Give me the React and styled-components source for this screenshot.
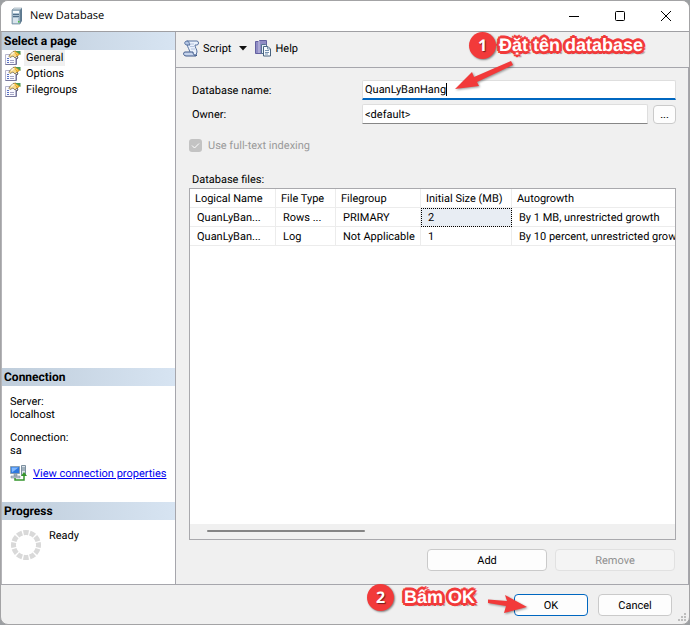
import React, { useState } from "react";
import styled, { createGlobalStyle } from "styled-components";

const GlobalStyle = createGlobalStyle`
  *, *::before, *::after { box-sizing: border-box; }
  body {
    margin: 0;
    background: #9c9fa2;
    color: #000;
    font: 11px/13px Roboto, "Liberation Sans", sans-serif;
    text-rendering: geometricPrecision;
  }
  button, input { font: inherit; color: inherit; text-rendering: inherit; }
`;

const Dialog = styled.main`
  display: flex;
  flex-direction: column;
  min-height: 100vh;
  border: 1px solid #a3a3a5;
  border-radius: 8px;
  background: #f0f0f0;
  overflow: hidden;
`;

const TitleBar = styled.header`
  display: flex;
  align-items: center;
  height: 31px;
  padding-left: 7px;
  background: #fff;
  border-bottom: 1px solid #9f9fa3;
`;

const Title = styled.h1`
  flex: 1;
  margin: 0 0 0 6px;
  font: 400 11px/16px "Open Sans", "Noto Sans", sans-serif;
`;

const WindowButton = styled.button`
  display: grid;
  place-items: center;
  width: 46px;
  height: 30px;
  padding: 0;
  border: 0;
  background: none;
`;

const Body = styled.div`
  flex: 1;
  display: grid;
  grid-template-columns: 175px minmax(0, 1fr);
  border-bottom: 1px solid #a6a6ac;
`;

const Sidebar = styled.aside`
  display: flex;
  flex-direction: column;
  background: #fff;
  border-left: 1px solid #b4b4b8;
  border-right: 1px solid #a6a6ac;
`;

const PageSection = styled.nav`
  flex: 1;
`;

const SideSection = styled.section`
  min-height: ${(p) => p.$height};
`;

const SideHeading = styled.h2`
  margin: 0;
  padding-left: 2px;
  font-size: 12px;
  line-height: 18px;
  background: linear-gradient(90deg, #bfcddb, #d7e4f2);
`;

const PageList = styled.ul`
  margin: 0;
  padding: 0;
  list-style: none;
`;

const PageItem = styled.li`
  display: flex;
  align-items: center;
  gap: 3px;
  height: 16px;
  padding-left: 3px;
`;

const PageButton = styled.button`
  padding: 0 2px;
  border: 0;
  line-height: 16px;
  background: ${(p) => (p.$active ? "#f0f0f0" : "transparent")};
`;

const ConnectionList = styled.dl`
  margin: 0;
  padding: 9px 8px 0;
  dd { margin: 0 0 10px; }
  dd:last-child { margin-bottom: 8px; }
`;

const ConnectionLink = styled.div`
  display: flex;
  align-items: center;
  gap: 6px;
  padding-left: 8px;
  a { color: #0000f0; }
`;

const Progress = styled.div`
  display: flex;
  gap: 7px;
  padding: 9px 8px;
`;

const Main = styled.div`
  display: flex;
  flex-direction: column;
  min-width: 0;
`;

const Toolbar = styled.div`
  display: flex;
  align-items: center;
  height: 36px;
  padding: 0 7px 3px;
  border-bottom: 1px solid #a6a6ac;
`;

const ToolButton = styled.button`
  display: flex;
  align-items: center;
  gap: 3px;
  padding: 0;
  border: 0;
  background: none;
`;

const MenuArrow = styled.button`
  display: grid;
  place-items: center;
  width: 24px;
  height: 20px;
  padding: 0;
  border: 0;
  background: none;
`;

const Content = styled.form`
  flex: 1;
  display: flex;
  flex-direction: column;
  padding: 12px 12px 13px 13px;
  border-right: 1px solid #a6a6ac;
`;

const Fields = styled.div`
  display: grid;
  grid-template-columns: 173px minmax(0, 1fr);
  row-gap: 4px;
  align-items: center;
`;

const FieldLabel = styled.label`
  padding-left: 3px;
`;

const FieldControl = styled.div`
  position: relative;
  display: flex;
  align-items: center;
  gap: 5px;
`;

const TextBox = styled.input`
  flex: 1;
  min-width: 0;
  height: 20px;
  padding: 0 2px;
  border: 1px solid #dedede;
  border-bottom: ${(p) => (p.$focused ? "2px solid #0067c0" : "1px solid #868686")};
  border-radius: 2px 2px 0 0;
  background: #fff;
  outline: none;
`;

const Caret = styled.span`
  position: absolute;
  left: 84px;
  top: 3px;
  width: 1px;
  height: 13px;
  background: #000;
`;

const Button = styled.button`
  width: ${(p) => p.$width};
  height: ${(p) => p.$height || "22px"};
  padding: 0;
  border: 1px solid ${(p) => (p.$primary ? "#0067c0" : "#cacaca")};
  border-radius: 4px;
  background: #fdfdfd;
  &:disabled {
    color: #8f8f8f;
    border-color: #e1e1e1;
    background: #f4f4f4;
  }
`;

const CheckLabel = styled.label`
  display: flex;
  align-items: center;
  gap: 6px;
  margin-top: 15px;
  color: #9a9a9a;
`;

const CheckBox = styled.input`
  appearance: none;
  width: 13px;
  height: 13px;
  margin: 0;
  border-radius: 3px;
  background: #c3c3c3;
`;

const CheckMark = styled.svg`
  position: absolute;
  inset: 0;
  pointer-events: none;
`;

const CheckWrap = styled.span`
  position: relative;
  display: flex;
`;

const FilesLabel = styled.h2`
  margin: 21px 0 2px 3px;
  font-size: 11px;
  font-weight: 400;
  line-height: 13px;
`;

const Grid = styled.div`
  flex: 1;
  display: flex;
  flex-direction: column;
  border: 1px solid #a9a9ad;
  background: #fff;
`;

const TableView = styled.div`
  flex: 1;
  overflow: hidden;
`;

const Table = styled.table`
  width: 100%;
  table-layout: fixed;
  border-collapse: separate;
  border-spacing: 0;
  th, td {
    height: 19px;
    padding: 0 0 0 7px;
    border-right: 1px solid #ececec;
    border-bottom: 1px solid #ececec;
    text-align: left;
    font-weight: 400;
    white-space: nowrap;
    overflow: hidden;
  }
  th { padding-left: 5px; }
  th:last-child, td:last-child { border-right: 0; }
`;

const Col = styled.col`
  width: ${(p) => p.$width};
`;

const Cell = styled.td`
  ${(p) => p.$selected && "background: #e8edf3; outline: 1px dotted #000; outline-offset: -1px;"}
`;

const ScrollTrack = styled.div`
  height: 15px;
  padding: 6px 17px;
  background: #f0f0f0;
`;

const ScrollThumb = styled.div`
  width: 35%;
  height: 2px;
  border-radius: 1px;
  background: #858585;
`;

const RowActions = styled.div`
  display: flex;
  justify-content: flex-end;
  gap: 8px;
  margin: 9px 1px 0 0;
`;

const Footer = styled.footer`
  position: relative;
  display: flex;
  justify-content: flex-end;
  gap: 10px;
  padding: 9px 17px 8px 0;
`;

const Grip = styled.svg`
  position: absolute;
  right: 2px;
  bottom: 2px;
`;

const Callout = styled.div`
  position: absolute;
  right: ${(p) => p.$right};
  top: ${(p) => p.$top};
  display: flex;
  align-items: center;
  gap: ${(p) => p.$gap};
  pointer-events: none;
`;

const CalloutNumber = styled.span`
  display: grid;
  place-items: center;
  width: 27px;
  height: 27px;
  border-radius: 50%;
  background: #f23a3a;
  color: #fff;
  font: 700 16px/27px "Open Sans", "Noto Sans", sans-serif;
  box-shadow: 1px 1px 2px #0007;
  text-shadow: 1px 1px 1px #0008;
`;

const CalloutText = styled.span`
  color: #fff;
  font: 700 18px/27px "Liberation Sans", Arial, sans-serif;
  white-space: nowrap;
  text-shadow:
    2px 0 #f23a3a, -2px 0 #f23a3a, 0 2px #f23a3a, 0 -2px #f23a3a,
    2px 2px #f23a3a, 2px -2px #f23a3a, -2px 2px #f23a3a, -2px -2px #f23a3a,
    3px 0 #f23a3a, -3px 0 #f23a3a, 0 3px #f23a3a, 0 -3px #f23a3a,
    3px 3px 1px #0005;
`;

const Arrow = styled.svg`
  position: absolute;
  right: ${(p) => p.$right};
  top: ${(p) => p.$top};
  overflow: visible;
  pointer-events: none;
  filter: drop-shadow(1px 1px 1px #0006);
`;

const ServerIcon = () => (
  <svg width="16" height="18" viewBox="0 0 16 18" aria-hidden="true">
    <path d="M4 3 6 1h8l-2 2z" fill="#dbe6ec" stroke="#8fa0ac" strokeWidth=".6" />
    <path d="M12 3l2-2v13l-2 3z" fill="#5d7990" />
    <path d="M4 3h8v14H4z" fill="#aac0d0" stroke="#6f8798" strokeWidth=".7" />
    <path d="M5 4h6v2H5z" fill="#f5fafc" />
    <path d="M5 7.5h6M5 9.5h6" stroke="#506e88" />
    <path d="M5 11h5v5H5z" fill="#d7e3eb" />
    <path d="M10 14h1.5v1.5H10z" fill="#48c63c" />
  </svg>
);

const PageIcon = () => (
  <svg width="16" height="16" viewBox="0 0 16 16" aria-hidden="true">
    <path d="M.5 4.500h10v10H.5z" fill="#fafaff" stroke="#b5b5cd" />
    <path d="M.5 14.500h11V8" fill="none" stroke="#77779c" />
    <path d="M2 8.500h2M2 10.500h2M2 12.500h2" stroke="#5871c4" />
    <path d="M5 10.500h4M5 12.500h4" stroke="#a4a4c4" />
    <path d="M4.500 5 8 1.500l3-.5 2.500 4-3.500 3-2-2-3 1.500L4 6.500z" fill="#f7d98a" stroke="#6c6046" strokeWidth=".7" />
    <path d="M5.500 4.500 8 2h2L7 5z" fill="#fff6d8" />
    <path d="M9 1h5l1.500 3-3.500 2.500z" fill="#e8a122" />
    <path d="M10 1h5.500v4L13 3z" fill="#4f9a58" />
    <path d="m10.500 2.500 2.500 2" stroke="#ffe16b" />
    <path d="m12 6 1 2-1.500 1" fill="none" stroke="#333" strokeWidth=".8" />
  </svg>
);

const ScriptIcon = () => (
  <svg width="17" height="17" viewBox="0 0 17 17" aria-hidden="true">
    <path d="M4 1h10c2 0 2 4 0 4h-2c0 3 2 4 2 7l-1 3H7C8 10 3 7 4 1z" fill="#e9f0fb" stroke="#56719f" />
    <path d="M4 1C1 1 1 5 4 5h3C6 3 6 1 4 1z" fill="#b5c6e4" stroke="#56719f" />
    <path d="M2 12h8c0 3 2 4 4 3l-1 1H3c-3 0-3-4-1-4z" fill="#c6d4ec" stroke="#3e5888" />
    <path d="M7 4h4M7 6.500h4M8 9h4" stroke="#b3c2de" />
  </svg>
);

const HelpIcon = () => (
  <svg width="17" height="17" viewBox="0 0 17 17" aria-hidden="true">
    <path d="M.500 1.500h3l1-1h7v13H.500z" fill="#8f8cc4" stroke="#6360a0" />
    <path d="M4 1v12" stroke="#c8c6e6" />
    <path d="M6.500 4.500h4l2 2v7h-6z" fill="#e8f1fb" stroke="#54718f" />
    <path d="M8.500 6.500h4.500l2.500 2.500v7h-7z" fill="#f8fcff" stroke="#48627e" />
    <path d="M12.500 6.500V9H15M10 10.500h4M10 12.500h4M10 14h3" fill="none" stroke="#7892ae" />
  </svg>
);

const NetworkIcon = () => (
  <svg width="17" height="17" viewBox="0 0 17 17" aria-hidden="true">
    <path d="M.500 1.500h9v7h-9z" fill="#2e78df" stroke="#8aa0b4" />
    <path d="M1.500 2.500h7L2 7.500z" fill="#82b9ff" />
    <path d="M4 9h3v2H4zM1 11h9v2H1z" fill="#b9c5cf" stroke="#718291" strokeWidth=".5" />
    <path d="M11.500.500h4v10h-4z" fill="#dbe4eb" stroke="#7c8f9f" />
    <path d="M12 3h3M12 5h3" stroke="#6b8192" />
    <path d="M5 13v2h9V9" fill="none" stroke="#35952c" strokeWidth="1.500" />
    <path d="m11 11 3-4 3 4z" fill="#35952c" />
  </svg>
);

const Spinner = () => (
  <svg width="32" height="32" viewBox="0 0 32 32" aria-hidden="true">
    <circle cx="16" cy="16" r="12.500" fill="none" stroke="#d9d9d9" strokeWidth="5"
      pathLength="120" strokeDasharray="8 2" strokeDashoffset="4" />
  </svg>
);

const files = [
  ["QuanLyBan...", "Rows ...", "PRIMARY", "2", "By 1 MB, unrestricted growth"],
  ["QuanLyBan...", "Log", "Not Applicable", "1", "By 10 percent, unrestricted growth"],
];
const columns = [
  ["Logical Name", "86px"],
  ["File Type", "60px"],
  ["Filegroup", "85px"],
  ["Initial Size (MB)", "91px"],
  ["Autogrowth", "auto"],
];

export default function App() {
  const [page, setPage] = useState("General");
  return (
    <>
      <GlobalStyle />
      <Dialog>
        <TitleBar>
          <ServerIcon />
          <Title>New Database</Title>
          <WindowButton aria-label="Minimize">
            <svg width="12" height="12"><path d="M1 6.500h10" stroke="#000" /></svg>
          </WindowButton>
          <WindowButton aria-label="Maximize">
            <svg width="12" height="12"><rect x="1.500" y="1.500" width="9" height="9" rx="1" fill="none" stroke="#000" /></svg>
          </WindowButton>
          <WindowButton aria-label="Close">
            <svg width="12" height="12"><path d="m1 1 10 10M11 1 1 11" stroke="#000" /></svg>
          </WindowButton>
        </TitleBar>

        <Body>
          <Sidebar>
            <PageSection>
              <SideHeading>Select a page</SideHeading>
              <PageList>
                {["General", "Options", "Filegroups"].map((name) => (
                  <PageItem key={name}>
                    <PageIcon />
                    <PageButton $active={page === name} onClick={() => setPage(name)}>{name}</PageButton>
                  </PageItem>
                ))}
              </PageList>
            </PageSection>
            <SideSection $height="134px">
              <SideHeading>Connection</SideHeading>
              <ConnectionList>
                <dt>Server:</dt>
                <dd>localhost</dd>
                <dt>Connection:</dt>
                <dd>sa</dd>
              </ConnectionList>
              <ConnectionLink>
                <NetworkIcon />
                <a href="#connection">View connection properties</a>
              </ConnectionLink>
            </SideSection>
            <SideSection $height="82px">
              <SideHeading>Progress</SideHeading>
              <Progress>
                <Spinner />
                <span>Ready</span>
              </Progress>
            </SideSection>
          </Sidebar>

          <Main>
            <Toolbar>
              <ToolButton><ScriptIcon />Script</ToolButton>
              <MenuArrow aria-label="Script options">
                <svg width="8" height="5"><path d="M0 0h8L4 4.500z" fill="#111" /></svg>
              </MenuArrow>
              <ToolButton><HelpIcon />Help</ToolButton>
            </Toolbar>
            <Content onSubmit={(e) => e.preventDefault()}>
              <Fields>
                <FieldLabel htmlFor="db-name">Database name:</FieldLabel>
                <FieldControl>
                  <TextBox id="db-name" defaultValue="QuanLyBanHang" $focused />
                  <Caret />
                  <Callout $right="33px" $top="-48px" $gap="3px">
                    <CalloutNumber>1</CalloutNumber>
                    <CalloutText>Đặt tên database</CalloutText>
                  </Callout>
                  <Arrow $right="163px" $top="-20px" width="58" height="30" viewBox="0 0 58 30" aria-hidden="true">
                    <path d="M0 29 17 12l2 5L56 1l2 4-36 17 2 4z" fill="#f23a3a" />
                  </Arrow>
                </FieldControl>
                <FieldLabel htmlFor="owner">Owner:</FieldLabel>
                <FieldControl>
                  <TextBox id="owner" defaultValue="<default>" />
                  <Button type="button" $width="23px" $height="19px" aria-label="Browse owners">...</Button>
                </FieldControl>
              </Fields>
              <CheckLabel>
                <CheckWrap>
                  <CheckBox type="checkbox" defaultChecked disabled />
                  <CheckMark width="13" height="13"><path d="m3 6.500 2.500 2.500L10 4.500" fill="none" stroke="#fff" /></CheckMark>
                </CheckWrap>
                Use full-text indexing
              </CheckLabel>
              <FilesLabel>Database files:</FilesLabel>
              <Grid>
                <TableView>
                  <Table>
                    <colgroup>{columns.map(([name, width]) => <Col key={name} $width={width} />)}</colgroup>
                    <thead>
                      <tr>{columns.map(([name]) => <th key={name} scope="col">{name}</th>)}</tr>
                    </thead>
                    <tbody>
                      {files.map((row, r) => (
                        <tr key={r}>
                          {row.map((value, c) => <Cell key={c} $selected={r === 0 && c === 3}>{value}</Cell>)}
                        </tr>
                      ))}
                    </tbody>
                  </Table>
                </TableView>
                <ScrollTrack><ScrollThumb /></ScrollTrack>
              </Grid>
              <RowActions>
                <Button type="button" $width="120px">Add</Button>
                <Button type="button" $width="120px" disabled>Remove</Button>
              </RowActions>
            </Content>
          </Main>
        </Body>

        <Footer>
          <Button $width="74px" $primary>OK</Button>
          <Button $width="74px">Cancel</Button>
          <Callout $right="214px" $top="-1px" $gap="10px">
            <CalloutNumber>2</CalloutNumber>
            <CalloutText>Bấm OK</CalloutText>
          </Callout>
          <Arrow $right="162px" $top="10px" width="39" height="18" viewBox="0 0 39 18" aria-hidden="true">
            <path d="M0 4.500 19 6l-2-6 22 12-23 6 2-7-18-3z" fill="#f23a3a" />
          </Arrow>
          <Grip width="9" height="9" aria-hidden="true">
            <path d="M6 0h2v2H6zM3 3h2v2H3zM6 3h2v2H6zM0 6h2v2H0zM3 6h2v2H3zM6 6h2v2H6z" fill="#bdbdbd" />
          </Grip>
        </Footer>
      </Dialog>
    </>
  );
}
